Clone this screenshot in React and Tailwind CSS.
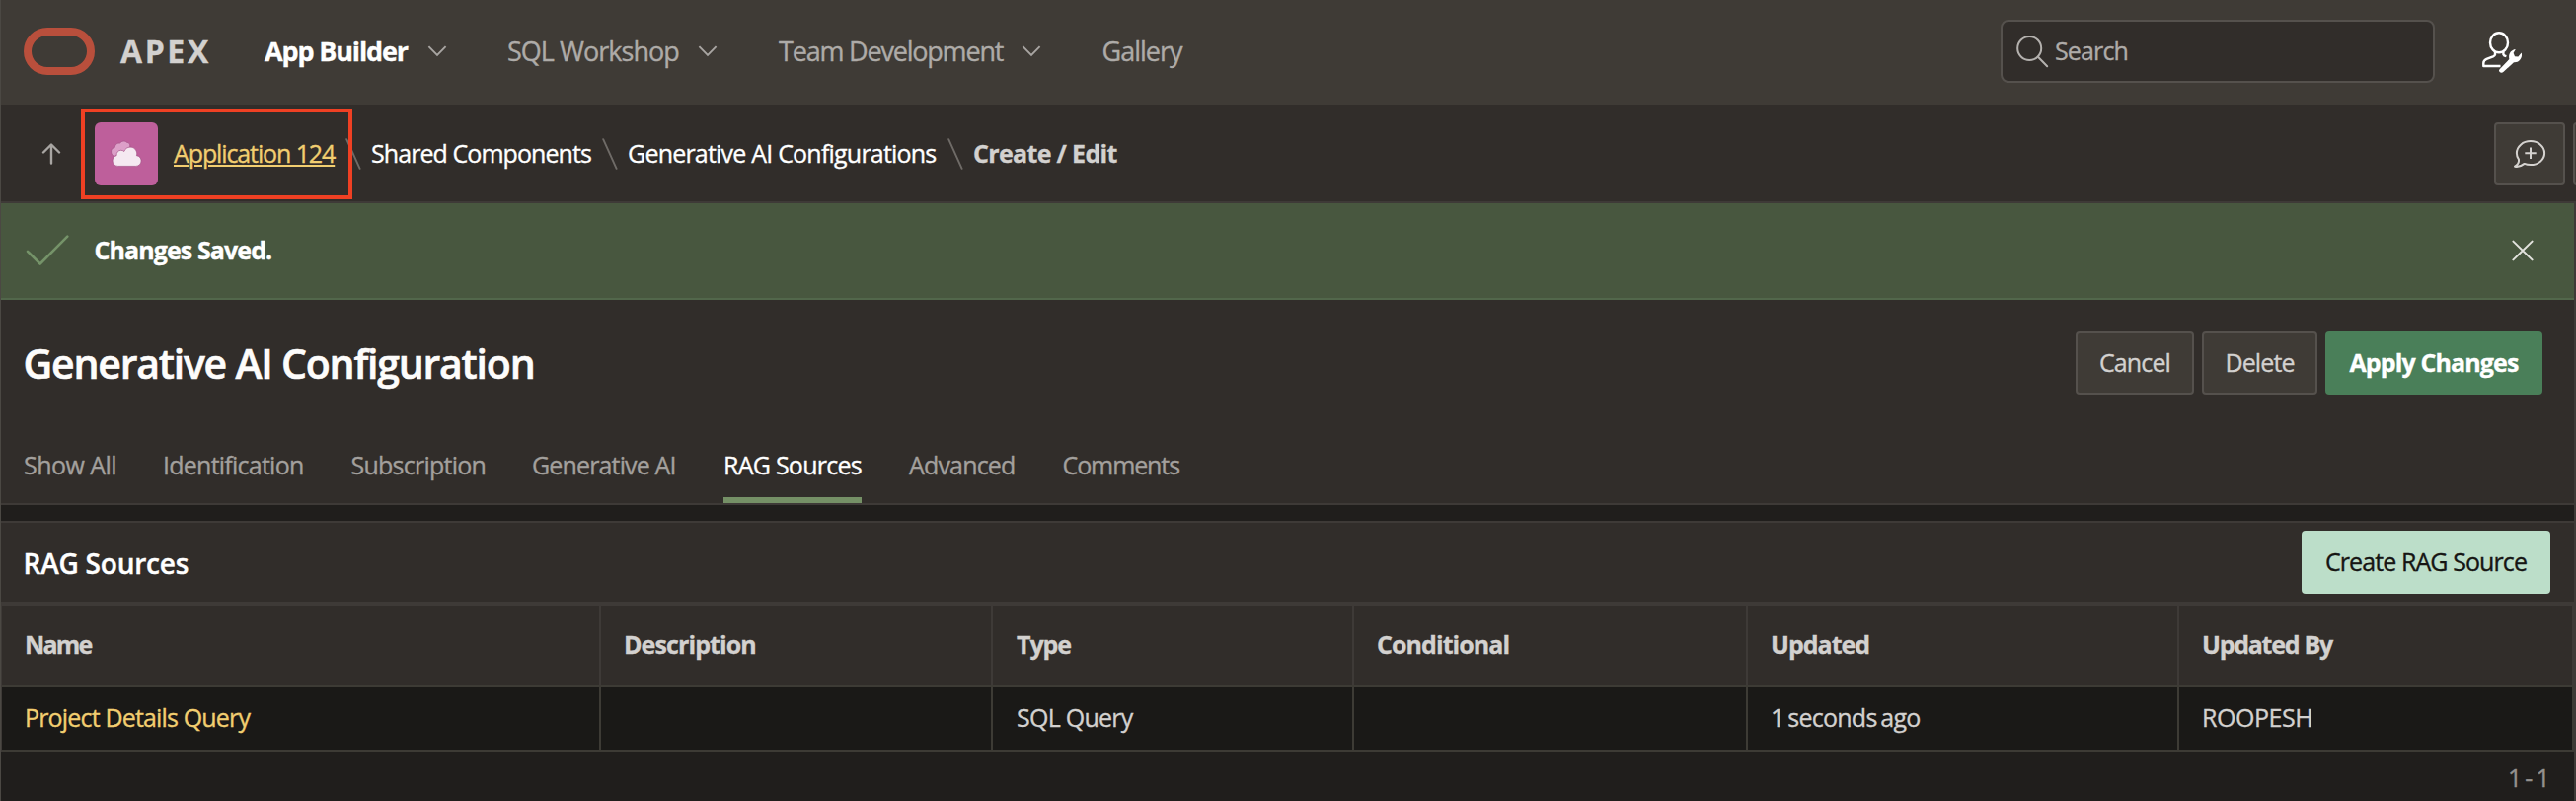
const OracleLogo = () => (
  <svg className="h-12 w-[72px]" viewBox="0 0 72 48" fill="none">
    <rect x="4" y="4" width="64" height="40" rx="20" stroke="#b94f3c" strokeWidth="8" />
  </svg>
);

const Chevron = () => (
  <svg className="h-3 w-5" viewBox="0 0 20 12" fill="none" stroke="#a8a5a2" strokeWidth="1.9">
    <path d="M1.4 1.2 10 10 18.6 1.2" />
  </svg>
);

const SearchIcon = () => (
  <svg className="size-[34px]" viewBox="0 0 34 34" fill="none" stroke="#b4b1ae" strokeWidth="2" strokeLinecap="round">
    <circle cx="14.2" cy="14" r="12" />
    <path d="M23.2 23 32.2 32.2" />
  </svg>
);

const AdminIcon = () => (
  <svg className="h-[46px] w-[50px]" viewBox="0 0 50 46" fill="none">
    <g stroke="#fff" strokeWidth="2.4" strokeLinejoin="round">
      <ellipse cx="22" cy="14.3" rx="9" ry="10" />
      <path d="M18 24v2.6q-.4 1-2 1.7l-6.6 2.6Q6.3 32.3 6.3 35v3H23.5" />
      <path d="M26.4 24v2.2q.6 1.4 3 2" />
    </g>
    <path
      d="M22.6 41.2 32.4 31C31.2 26.5 33.500 21.600 38.8 21L36.6 24.8 38 28.3 41.4 28.6 44.7 24.6C46.200 29.5 42.5 34.800 37 34.300L26.6 43.8C24 46 20.6 43.4 22.6 41.2Z"
      fill="#fff"
    />
  </svg>
);

const CommentIcon = () => (
  <svg className="h-8 w-9" viewBox="0 0 36 32" fill="none" stroke="#d5d2cf" strokeWidth="2" strokeLinejoin="round">
    <path d="M7 21.7C5.6 19.8 4.9 17.6 4.9 15.2 4.9 8.5 11.2 3.1 19 3.1S33.1 8.5 33.1 15.2 26.8 27.1 19 27.1C16.8 27.1 14.6 26.7 12.7 25.9 9.5 28.5 6.2 29.3 3 28.7 5.7 27.2 7.4 24.6 7 21.7Z" />
    <path d="M13.3 15.2h11.4M19 9.5v11.4" />
  </svg>
);

const CloudIcon = () => (
  <svg className="h-7 w-8" viewBox="0 0 32 28">
    <path
      d="M3.6 16.5C1 15.6.2 12.5.7 10.5 1.3 8.5 3 7.4 4.3 7.4 4.6 4.6 6.8 2.6 9.5 3.2 11 .8 14.5.3 16.5 2.3 18.8 2.3 20.3 4.2 19.7 6.5L14 14Z"
      fill="#dc9fc8"
      stroke="#a34f85"
      strokeWidth=".7"
    />
    <path
      d="M7.6 26.4C4.3 26.4 2 24 2 20.9 2 18.2 3.7 16.2 6.1 15.7 5.8 12.5 8 10.3 10.6 10.3 12 10.3 13 10.7 13.8 11.5 14.8 8.7 17.2 7.1 20 7.1 23.8 7.1 26.6 9.9 26.7 13.7 26.7 14.5 26.6 15.1 26.4 15.7 29.1 16 31.1 18.2 31.1 20.9 31.1 24 28.7 26.4 25.6 26.4Z"
      fill="#f5e9f1"
      stroke="#a34f85"
      strokeWidth=".7"
    />
  </svg>
);

const Slash = () => (
  <svg className="h-8 w-4" viewBox="0 0 16 32" stroke="#6f6b67" strokeWidth="1.9" strokeLinecap="round">
    <path d="M1.2 1.2 14.6 30.8" />
  </svg>
);

function Header() {
  return (
    <header className="flex h-[106px] items-center bg-[#3f3b36] pb-0.5 pl-[23px] text-[27px] text-[#aeaba8]">
      <div className="w-[98px]"><OracleLogo /></div>
      <div className="w-[146px] pb-px text-[32px] font-bold tracking-[2.6px] text-[#d3d1cf]">APEX</div>
      <nav className="flex items-center">
        <a className="flex w-[246px] items-center font-bold text-white">
          <span className="w-[164.5px] tracking-[-1.15px]">App Builder</span><Chevron />
        </a>
        <a className="flex w-[275px] items-center">
          <span className="w-[193px] tracking-[-0.97px]">SQL Workshop</span><Chevron />
        </a>
        <a className="flex w-[327.5px] items-center">
          <span className="w-[246px] tracking-[-1.2px]">Team Development</span><Chevron />
        </a>
        <a className="tracking-[-0.98px]">Gallery</a>
      </nav>
      <div className="mr-[43px] ml-auto flex h-16 w-[440px] items-center rounded-lg border-2 border-[#55514d] bg-[#312d2a] pl-[13px] text-[25px] tracking-[-0.87px]">
        <span className="w-[40px]"><SearchIcon /></span>
        <span>Search</span>
      </div>
      <div className="mr-[50px]"><AdminIcon /></div>
    </header>
  );
}

function Breadcrumb() {
  return (
    <div className="relative flex h-[100px] items-center overflow-hidden border-b-2 border-[#3e3a37] pt-0.5 pl-[41px] text-white">
      <svg className="h-[22px] w-5" viewBox="0 0 20 22" fill="none" stroke="#a8a5a2" strokeWidth="2.4" strokeLinecap="round" strokeLinejoin="round">
        <path d="M10 20.5V2M2 9.5 10 1.5l8 8" />
      </svg>
      <div className="ml-[34px] flex size-16 items-center justify-center rounded-[6px] bg-[#be5f9b]"><CloudIcon /></div>
      <div className="w-[189.5px] pl-4 tracking-[-1.11px] text-[#f2ce70] underline decoration-2 underline-offset-[2px]">Application 124</div>
      <Slash />
      <div className="w-[244.5px] pl-[10.5px] tracking-[-0.93px]">Shared Components</div>
      <Slash />
      <div className="w-[334px] pl-[10px] tracking-[-0.79px]">Generative AI Configurations</div>
      <Slash />
      <div className="pl-[10px] font-bold tracking-[-0.67px] text-[#d3d1cf]">Create / Edit</div>
      <div className="mr-[-61px] ml-auto flex gap-2">
        <div className="flex h-16 w-[72px] items-center justify-center rounded-[4px] border-2 border-[#55514d] bg-[#3f3b36]"><CommentIcon /></div>
        <div className="h-16 w-16 rounded-[4px] border-2 border-[#55514d] bg-[#3f3b36]" />
      </div>
      <div className="absolute top-1 left-[81px] h-[92px] w-[275px] border-4 border-[#ef4023]" />
    </div>
  );
}

function SuccessMessage() {
  return (
    <div className="flex h-[98px] items-center border-b-2 border-[#52674b] bg-[#48573f] pr-[41px] pl-[25px]">
      <svg className="h-8 w-11" viewBox="0 0 44 32" fill="none" stroke="#759369" strokeWidth="2.6" strokeLinecap="round" strokeLinejoin="round">
        <path d="M2 16.8 14.7 29.5 42.3 1.6" />
      </svg>
      <div className="ml-[25.5px] font-bold tracking-[-0.91px] text-white">Changes Saved.</div>
      <svg className="ml-auto h-[22px] w-[22px]" viewBox="0 0 22 22" fill="none" stroke="#e3e3de" strokeWidth="2" strokeLinecap="round">
        <path d="M1.4 1.6 20.6 20.4M20.6 1.6 1.4 20.4" />
      </svg>
    </div>
  );
}

function TitleBar() {
  return (
    <div className="flex h-32 items-center justify-between pr-8 pl-[22.5px]">
      <h1 className="pt-px text-[41px] font-semibold tracking-[-1.22px] text-[#fdfcfb] [-webkit-text-stroke:0.6px]">Generative AI Configuration</h1>
      <div className="flex gap-2 whitespace-nowrap text-[#d3d1cf]">
        <button className="h-16 w-[120px] rounded-[4px] border-2 border-[#55514d] bg-[#3f3b36] tracking-[-0.85px]">Cancel</button>
        <button className="h-16 w-[117px] rounded-[4px] border-2 border-[#55514d] bg-[#3f3b36] tracking-[-0.89px]">Delete</button>
        <button className="h-16 w-[220px] rounded-[4px] bg-[#4a7f59] font-bold tracking-[-0.88px] text-white">Apply Changes</button>
      </div>
    </div>
  );
}

function Tabs() {
  return (
    <div className="flex h-20 border-b-2 border-[#3e3a37] pl-[22px] leading-[79px] text-[#a3a09d]">
      <div className="w-[142px] pl-px tracking-[-0.55px]">Show All</div>
      <div className="w-[189.5px] tracking-[-0.75px]">Identification</div>
      <div className="w-[184.5px] pl-px tracking-[-0.75px]">Subscription</div>
      <div className="w-[194px] tracking-[-0.85px]">Generative AI</div>
      <div className="mr-12 h-[78px] w-[140px] border-b-6 border-[#759066] tracking-[-0.75px] text-white">RAG Sources</div>
      <div className="w-[155.5px] tracking-[-0.83px]">Advanced</div>
      <div className="tracking-[-1.1px]">Comments</div>
    </div>
  );
}

const Th = ({ children, className }) => (
  <div className={"flex h-20 items-center border-r-2 border-[#3e3a37] bg-[#312d2a] pl-[23px] font-bold text-[#d3d1cf] " + className}>{children}</div>
);

const Td = ({ children, className = "text-[#d3d1cf]" }) => (
  <div className={"flex h-[68px] items-center border-y-2 border-r-2 border-[#3d3b35] bg-[#1a1917] pl-[23px] " + className}>{children}</div>
);

function SourcesTable() {
  return (
    <div className="grid grid-cols-[607px_397px_366px_399px_437px_400px] border-l border-[#3e3a37]">
      <Th className="tracking-[-1.82px]">Name</Th>
      <Th className="tracking-[-0.9px]">Description</Th>
      <Th className="indent-px tracking-[-1.1px]">Type</Th>
      <Th className="tracking-[-0.93px]">Conditional</Th>
      <Th className="tracking-[-1px]">Updated</Th>
      <Th className="tracking-[-1.26px]">Updated By</Th>
      <Td className="tracking-[-0.83px] text-[#f2ce70]">Project Details Query</Td>
      <Td />
      <Td className="indent-px tracking-[-0.75px] text-[#d3d1cf]">SQL Query</Td>
      <Td />
      <Td className="tracking-[-0.75px] text-[#d3d1cf] [word-spacing:-2px]">1 seconds ago</Td>
      <Td className="tracking-[-0.45px] text-[#d3d1cf]">ROOPESH</Td>
    </div>
  );
}

export default function App() {
  return (
    <div className="h-[812px] w-[2610px] overflow-hidden border-l border-[#4b4843] bg-[#201e1c] font-['Open_Sans','Noto_Sans',sans-serif] text-[25px] whitespace-nowrap [-webkit-text-stroke:0.35px]">
      <Header />
      <div className="bg-[#312d2a]"><Breadcrumb /></div>
      <main className="h-[606px] border-r-2 border-[#3e3a37]">
        <SuccessMessage />
        <section className="bg-[#312d2a]">
          <TitleBar />
          <Tabs />
        </section>
        <section className="mt-4 border-t-2 border-[#3e3a37]">
          <div className="flex h-[84px] items-center justify-between border-b-4 border-[#3e3a37] bg-[#312d2a] pr-6 pl-[22.5px]">
            <h2 className="pt-px text-[28px] leading-none font-semibold tracking-[-0.22px] text-white [-webkit-text-stroke:0.4px]">RAG Sources</h2>
            <button className="h-16 w-[252px] rounded-[4px] bg-[#bcdec9] tracking-[-0.91px] text-[#161513]">Create RAG Source</button>
          </div>
          <SourcesTable />
          <div className="flex justify-end pt-2 pr-[25px] tracking-[-0.9px] text-[#94918e] [word-spacing:-1.5px]">1 - 1</div>
        </section>
      </main>
    </div>
  );
}
